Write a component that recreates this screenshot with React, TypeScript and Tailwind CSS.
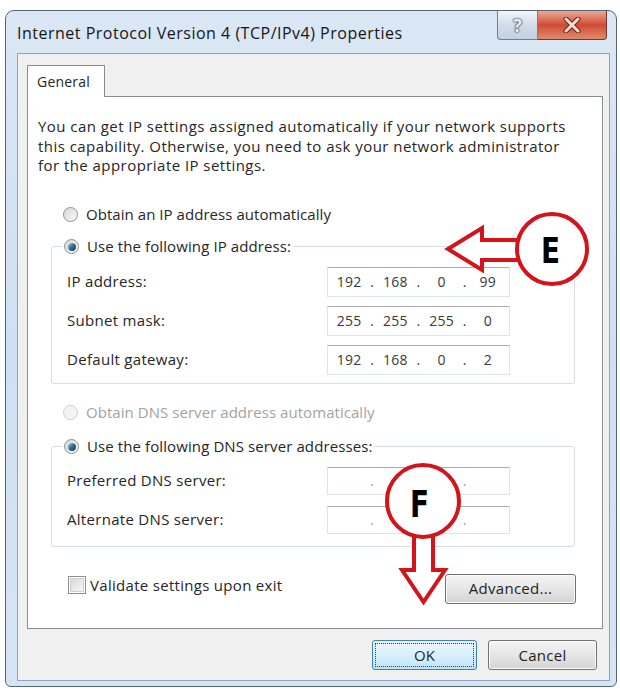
import React from "react";

function Radio({ checked, disabled }: { checked?: boolean; disabled?: boolean }) {
  return (
    <span
      className={
        disabled
          ? "flex h-[15px] w-[15px] shrink-0 items-center justify-center rounded-full border border-[#cfcfcf] bg-[#f3f3f3]"
          : "flex h-[15px] w-[15px] shrink-0 items-center justify-center rounded-full border border-[#8e8f8f] bg-gradient-to-br from-[#d6d6d6] to-[#fbfbfb]"
      }
    >
      {checked && (
        <span className="h-[8px] w-[8px] rounded-full bg-gradient-to-br from-[#9bd3ef] via-[#2f6c94] to-[#17384f]" />
      )}
    </span>
  );
}

function IPField({ parts }: { parts?: string[] }) {
  const p = parts ?? ["", "", "", ""];
  const dotOnly = !parts;
  return (
    <div className="flex h-full w-[183px] items-center border border-[#dfe3ea] border-t-[#abadb3] bg-white text-[14px] text-[#3a3a3a]">
      {p.map((v, i) => (
        <React.Fragment key={i}>
          {i > 0 && (
            <span className={dotOnly ? "w-[4px] text-center text-[#9a9a9a]" : "w-[4px] text-center"}>.</span>
          )}
          <span className="flex-1 text-center">{v}</span>
        </React.Fragment>
      ))}
    </div>
  );
}

function Row({ label, parts, h }: { label: string; parts?: string[]; h: string }) {
  return (
    <div className={`flex items-center justify-between ${h}`}>
      <span>{label}</span>
      <IPField parts={parts} />
    </div>
  );
}

function Btn({ children, w }: { children: React.ReactNode; w: string }) {
  return (
    <div
      className={`flex h-[30px] ${w} items-center justify-center rounded-[3px] border border-[#707070] bg-gradient-to-b from-[#f4f4f4] via-[#e6e6e6] to-[#d3d3d3] text-[15px] tracking-[0.3px] text-[#1e1e1e] shadow-[inset_0_0_0_1px_#fbfbfb]`}
    >
      {children}
    </div>
  );
}

export default function App() {
  return (
    <div className="relative h-[692px] w-[620px] overflow-hidden bg-white font-['Open_Sans',sans-serif] text-[#262626]">
      <div className="pl-[5px] pt-[10px]">
        {/* window */}
        <div className="flex h-[677px] w-[612px] flex-col rounded-t-[9px] rounded-b-[6px] border border-[#59636e] bg-gradient-to-b from-[#dae7f5] via-[#cfe0f2] to-[#d6e5f4]">
          {/* title bar */}
          <div className="flex h-[42px] shrink-0 items-start justify-between pl-[11px] pr-[9px]">
            <div className="mt-[11px] text-[16px] leading-[22px] tracking-[0.5px] text-[#151515]">
              Internet Protocol Version 4 (TCP/IPv4) Properties
            </div>
            <div className="flex">
              <div className="flex h-[29px] w-[41px] items-center justify-center rounded-bl-[4px] border border-t-0 border-[#6f7f93] bg-gradient-to-b from-[#f3f6fa] via-[#d1dcea] to-[#c2d2e4]">
                <span className="text-[18px] font-bold leading-none text-[#eef2f6] [text-shadow:0_0_1px_#3f4f62,0_0_2px_#3f4f62,0_0_2px_#3f4f62]">
                  ?
                </span>
              </div>
              <div className="flex h-[29px] w-[69px] items-center justify-center rounded-br-[4px] border border-l-0 border-t-0 border-[#7a3328] bg-gradient-to-b from-[#eaa897] via-[#cf4a33] to-[#df8a6c]">
                <svg width="20" height="16" viewBox="0 0 20 16">
                  <path d="M4 2 L16 14 M16 2 L4 14" stroke="#6b1e14" strokeWidth="5" strokeLinecap="round" />
                  <path d="M4 2 L16 14 M16 2 L4 14" stroke="#f6dcd6" strokeWidth="3" strokeLinecap="round" />
                </svg>
              </div>
            </div>
          </div>

          {/* content area */}
          <div className="ml-[11px] flex h-[628px] w-[593px] flex-col border border-[#8fa2b7] bg-[#f0f0f0] pl-[9px]">
            {/* tab */}
            <div className="relative z-10 mt-[11px] flex h-[32px] w-[78px] items-center border border-b-0 border-[#898c95] bg-white pl-[9px] text-[14px] tracking-[0.2px]">
              General
            </div>
            {/* panel */}
            <div className="-mt-px flex h-[533px] w-[576px] flex-col border border-[#898c95] bg-white text-[15px] tracking-[0.3px]">
              <p className="ml-[10px] mt-[20px] leading-[19.5px] tracking-[0.45px]">
                You can get IP settings assigned automatically if your network supports
                <br />
                this capability. Otherwise, you need to ask your network administrator
                <br />
                for the appropriate IP settings.
              </p>

              <div className="ml-[35px] mt-[29px] flex h-[20px] items-center gap-[8px] tracking-[0.05px]">
                <Radio />
                <span>Obtain an IP address automatically</span>
              </div>

              <fieldset className="ml-[23px] mt-[12px] w-[524px] rounded-[3px] border border-[#d5dfe5]">
                <legend className="ml-[10px] px-[2px] tracking-[0.1px]">
                  <span className="flex h-[20px] items-center gap-[8px]">
                    <Radio checked />
                    <span>Use the following IP address:</span>
                  </span>
                </legend>
                <div className="flex flex-col gap-[9px] pb-[8px] pl-[15px] pr-[64px] pt-[10px]">
                  <Row label="IP address:" parts={["192", "168", "0", "99"]} h="h-[30px]" />
                  <Row label="Subnet mask:" parts={["255", "255", "255", "0"]} h="h-[30px]" />
                  <Row label="Default gateway:" parts={["192", "168", "0", "2"]} h="h-[30px]" />
                </div>
              </fieldset>

              <div className="ml-[35px] mt-[19px] flex h-[20px] items-center gap-[8px] tracking-[0.05px] text-[#a3a3a3]">
                <Radio disabled />
                <span>Obtain DNS server address automatically</span>
              </div>

              <fieldset className="ml-[23px] mt-[14px] w-[524px] rounded-[3px] border border-[#d5dfe5]">
                <legend className="ml-[10px] px-[2px] tracking-[0.1px]">
                  <span className="flex h-[20px] items-center gap-[8px]">
                    <Radio checked />
                    <span>Use the following DNS server addresses:</span>
                  </span>
                </legend>
                <div className="flex flex-col gap-[11px] pb-[12px] pl-[15px] pr-[64px] pt-[10px]">
                  <Row label="Preferred DNS server:" h="h-[28px]" />
                  <Row label="Alternate DNS server:" h="h-[28px]" />
                </div>
              </fieldset>

              <div className="mt-[27px] flex items-start justify-between pl-[40px] pr-[26px]">
                <div className="flex items-center gap-[4px]">
                  <span className="flex h-[18px] w-[18px] items-center justify-center border border-[#8f8f8f] bg-white">
                    <span className="h-[14px] w-[14px] border border-[#d0d0d0] bg-gradient-to-br from-[#d8d8d8] to-[#f6f6f6]" />
                  </span>
                  <span>Validate settings upon exit</span>
                </div>
                <Btn w="w-[131px]">Advanced...</Btn>
              </div>
            </div>

            {/* bottom buttons */}
            <div className="mt-[11px] flex justify-end gap-[11px] pr-[12px]">
              <div className="flex h-[30px] w-[105px] items-center justify-center rounded-[3px] border border-[#3c7fb1] bg-gradient-to-b from-[#eef7fd] via-[#d9effc] to-[#bfe3f8] p-[2px] text-[15px]">
                <div className="flex h-full w-full items-center justify-center border border-dotted border-[#24425e]">
                  OK
                </div>
              </div>
              <Btn w="w-[109px]">Cancel</Btn>
            </div>
          </div>
        </div>
      </div>

      {/* annotations */}
      <svg className="pointer-events-none absolute left-0 top-0" width="620" height="692" viewBox="0 0 620 692">
        <path
          d="M448 249 L482 228 L482 240 L522 240 L522 260 L482 260 L482 270 Z"
          fill="white"
          stroke="#d3141b"
          strokeWidth="4"
          strokeLinejoin="miter"
        />
        <circle cx="552" cy="249" r="35" fill="white" stroke="#d3141b" strokeWidth="4" />
        <text
          x="541"
          y="263"
          textLength="19"
          lengthAdjust="spacingAndGlyphs"
          fontFamily="'DejaVu Sans', sans-serif"
          fontWeight="bold"
          fontSize="36"
          fill="#000"
        >
          E
        </text>

        <path
          d="M414 532 L414 570 L402 570 L423.5 602 L445 570 L433 570 L433 532 Z"
          fill="white"
          stroke="#d3141b"
          strokeWidth="4"
          strokeLinejoin="miter"
        />
        <circle cx="423" cy="501" r="36" fill="white" stroke="#d3141b" strokeWidth="4" />
        <text
          x="410"
          y="517"
          textLength="19"
          lengthAdjust="spacingAndGlyphs"
          fontFamily="'DejaVu Sans', sans-serif"
          fontWeight="bold"
          fontSize="37"
          fill="#000"
        >
          F
        </text>
      </svg>
    </div>
  );
}
